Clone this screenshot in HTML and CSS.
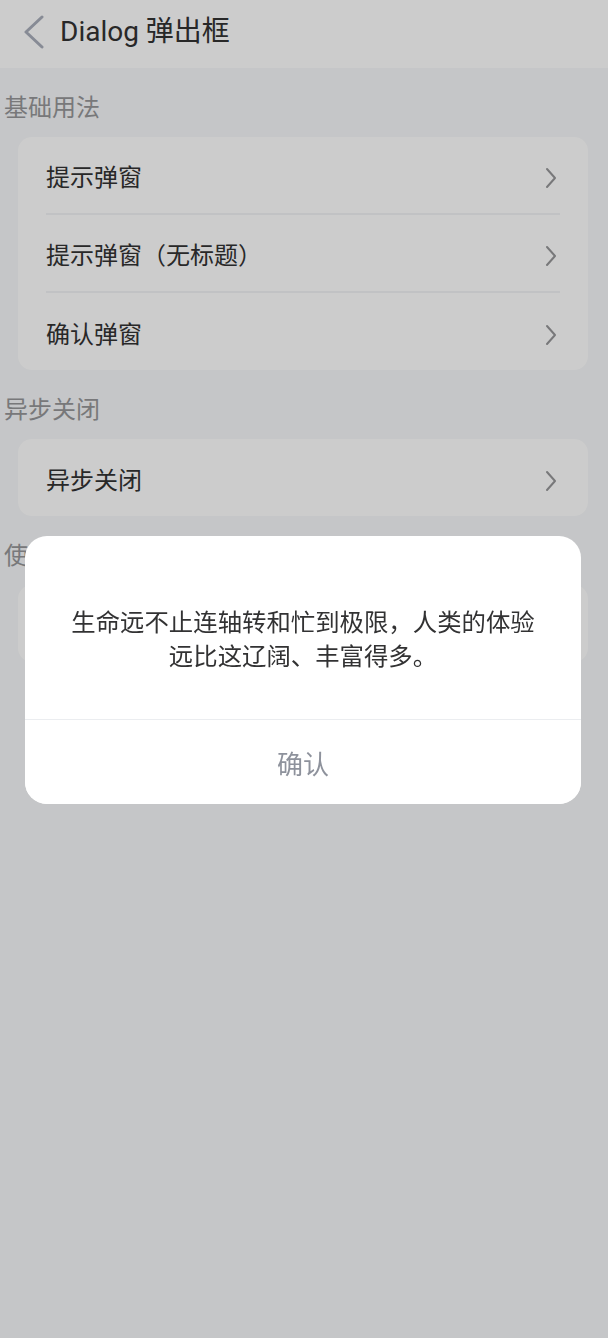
FILE: index.html
```html
<!DOCTYPE html>
<html lang="zh-CN">
<head>
  <meta charset="UTF-8" />
  <meta name="viewport" content="width=device-width, initial-scale=1.0"/>
  <title>Dialog 弹出框</title>
  <link rel="stylesheet" href="styles.css">
</head>
<body>
  <div class="page">
    <header class="nav">
      <svg class="nav-back" width="24" height="34" viewBox="0 0 24 34">
        <path d="M20 2 L4 17 L20 32" fill="none" stroke="#a9aebb" stroke-width="3" stroke-linecap="round" stroke-linejoin="round"/>
      </svg>
      <h1 class="nav-title">Dialog 弹出框</h1>
    </header>

    <section class="block">
      <h3 class="block-title">基础用法</h3>
      <div class="card">
        <div class="cell"><span>提示弹窗</span><svg class="arrow" width="14" height="22" viewBox="0 0 14 22"><path d="M3 2 L11 11 L3 20" fill="none" stroke="#969799" stroke-width="2" stroke-linecap="round" stroke-linejoin="round"/></svg></div>
        <div class="cell"><span>提示弹窗（无标题）</span><svg class="arrow" width="14" height="22" viewBox="0 0 14 22"><path d="M3 2 L11 11 L3 20" fill="none" stroke="#969799" stroke-width="2" stroke-linecap="round" stroke-linejoin="round"/></svg></div>
        <div class="cell"><span>确认弹窗</span><svg class="arrow" width="14" height="22" viewBox="0 0 14 22"><path d="M3 2 L11 11 L3 20" fill="none" stroke="#969799" stroke-width="2" stroke-linecap="round" stroke-linejoin="round"/></svg></div>
      </div>
    </section>

    <section class="block">
      <h3 class="block-title">异步关闭</h3>
      <div class="card">
        <div class="cell"><span>异步关闭</span><svg class="arrow" width="14" height="22" viewBox="0 0 14 22"><path d="M3 2 L11 11 L3 20" fill="none" stroke="#969799" stroke-width="2" stroke-linecap="round" stroke-linejoin="round"/></svg></div>
      </div>
    </section>

    <section class="block">
      <h3 class="block-title">使用 Dialog 组件</h3>
      <div class="card">
        <div class="cell"><span>使用 Dialog 组件</span><svg class="arrow" width="14" height="22" viewBox="0 0 14 22"><path d="M3 2 L11 11 L3 20" fill="none" stroke="#969799" stroke-width="2" stroke-linecap="round" stroke-linejoin="round"/></svg></div>
      </div>
    </section>
  </div>

  <div class="overlay"></div>

  <div class="dialog">
    <div class="dialog-message">生命远不止连轴转和忙到极限，人类的体验远比这辽阔、丰富得多。</div>
    <div class="dialog-footer">
      <button class="dialog-confirm">确认</button>
    </div>
  </div>
</body>
</html>
```

FILE: styles.css
```css
* {
  box-sizing: border-box;
}
body {
  margin: 0;
  background: #f7f8fa;
  color: #323233;
  font-family: Roboto, "Noto Sans CJK SC", sans-serif;
  height: 1338px;
  overflow: hidden;
}
.nav {
  display: flex;
  align-items: center;
  height: 68px;
  padding: 0 0 4px 22px;
  background: #fff;
}
.nav-back {
  display: block;
  margin-right: 14px;
}
.nav-title {
  margin: 0;
  font-size: 28px;
  font-weight: 400;
  line-height: 34px;
  color: #323233;
}
.block-title {
  margin: 0;
  padding: 23px 4px 12px;
  font-size: 24px;
  font-weight: 400;
  line-height: 34px;
  color: #969799;
}
.card {
  margin: 0 20px 0 18px;
  background: #fff;
  border-radius: 14px;
  overflow: hidden;
}
.cell {
  display: flex;
  align-items: center;
  justify-content: space-between;
  height: 78px;
  margin: 0 28px;
  padding-top: 6px;
  font-size: 24px;
  line-height: 34px;
  color: #323233;
  border-bottom: 2px solid #f2f3f5;
}
.cell:last-child {
  border-bottom: none;
  height: 77px;
}
.arrow {
  display: block;
  margin-right: 2px;
}
.overlay {
  position: fixed;
  top: 0;
  left: 0;
  right: 0;
  bottom: 0;
  background: rgba(0, 0, 0, 0.2);
}
.dialog {
  position: fixed;
  top: 536px;
  left: 25px;
  width: 556px;
  background: #fff;
  border-radius: 22px;
  overflow: hidden;
}
.dialog-message {
  padding: 70px 40px 45px;
  font-size: 24.4px;
  line-height: 34px;
  text-align: center;
  color: #323233;
  border-bottom: 1px solid #ebedf0;
}
.dialog-footer {
  display: flex;
}
.dialog-confirm {
  flex: 1;
  height: 84px;
  border: none;
  background: #fff;
  font-family: Roboto, "Noto Sans CJK SC", sans-serif;
  font-size: 26px;
  color: #8e929c;
  cursor: pointer;
}
```
